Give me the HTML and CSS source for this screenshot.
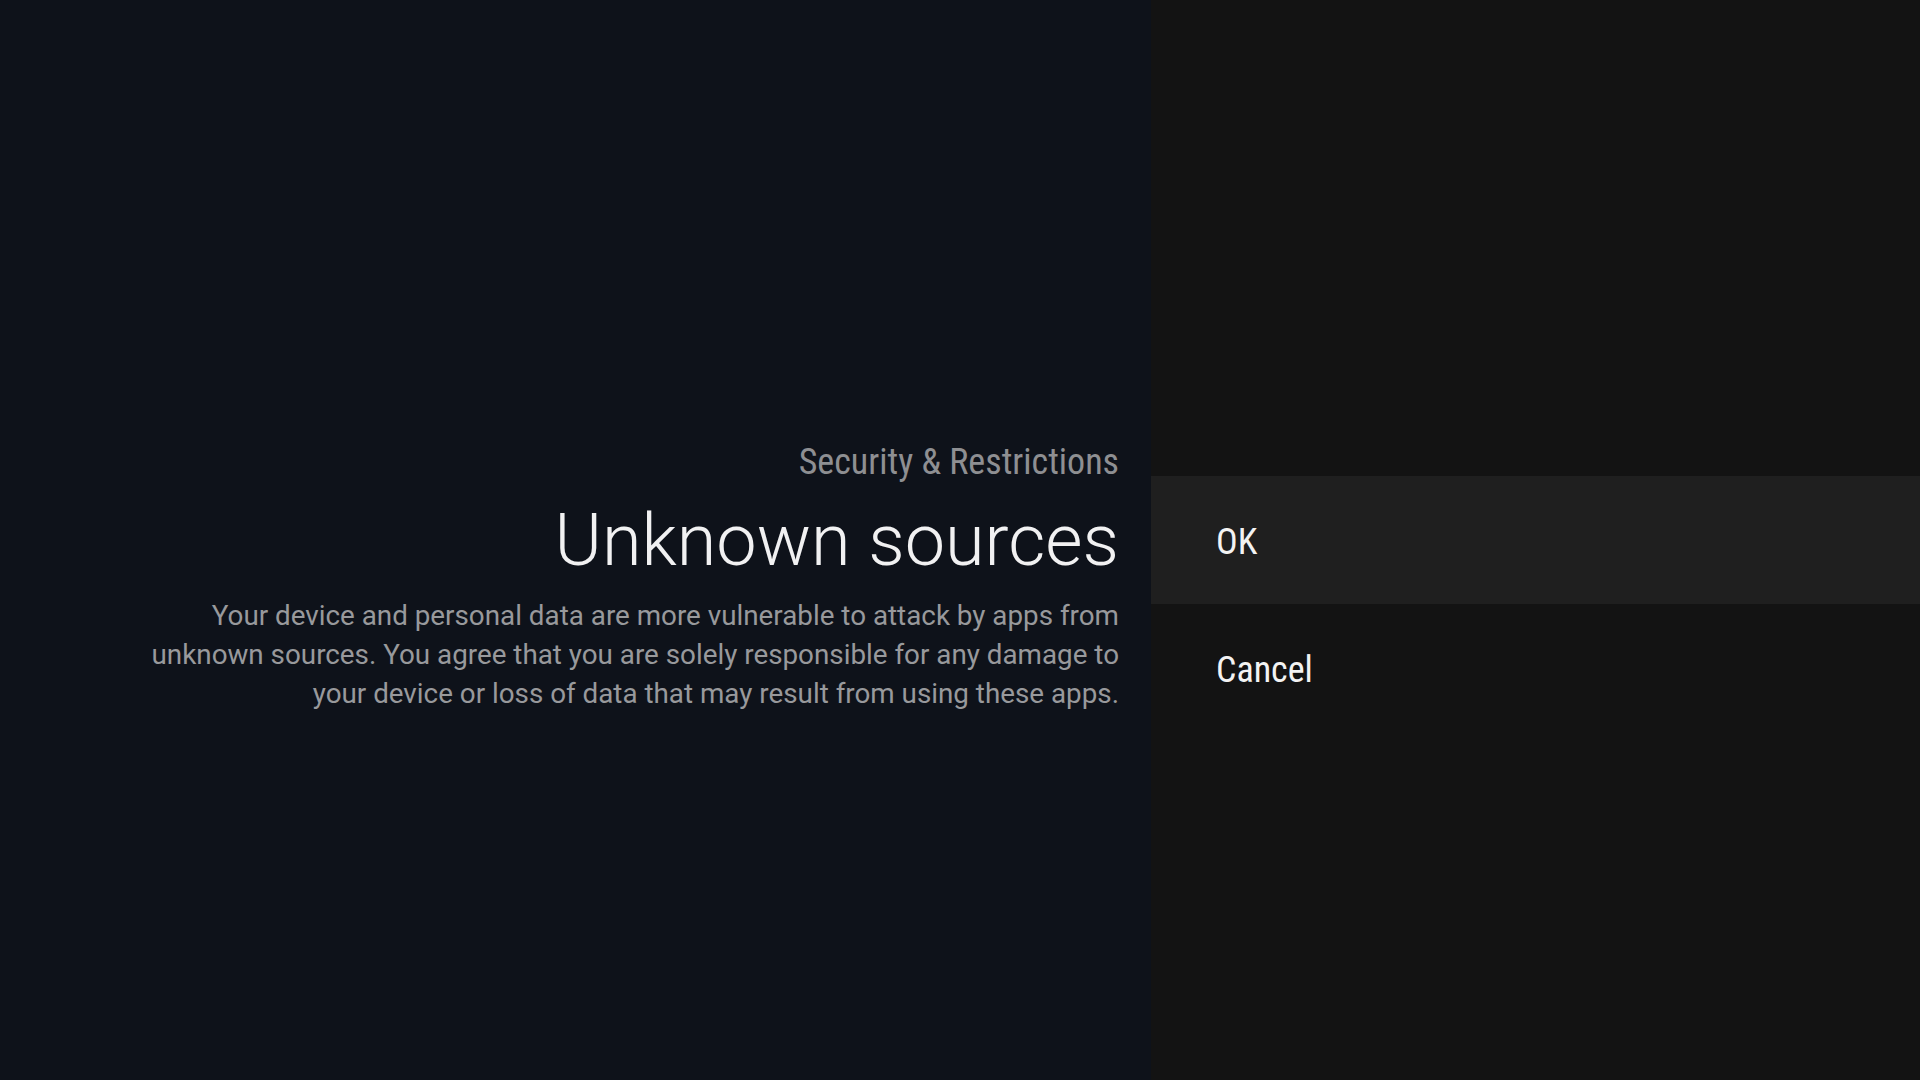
FILE: index.html
```html
<!DOCTYPE html>
<html lang="en">
<head>
  <meta charset="UTF-8">
  <title>Unknown sources</title>
  <link rel="stylesheet" href="styles.css">
</head>
<body>

  <div class="screen">
    <div class="guidance">
      <div class="breadcrumb">Security &amp; Restrictions</div>
      <h1 class="title">Unknown sources</h1>
      <p class="description">Your device and personal data are more vulnerable to attack by apps from unknown sources. You agree that you are solely responsible for any damage to your device or loss of data that may result from using these apps.</p>
    </div>

    <div class="actions">
      <div class="action focused">OK</div>
      <div class="action">Cancel</div>
    </div>
  </div>

</body>
</html>
```

FILE: styles.css
```css
html, body {
  margin: 0;
  height: 100%;
}

body {
  font-family: Roboto, "Noto Sans", sans-serif;
  background: #0f121a;
  color: #fff;
  overflow: hidden;
}

.screen {
  display: flex;
  height: 1080px;
}

.guidance {
  width: 1151px;
  box-sizing: border-box;
  padding: 440px 32px 0 100px;
  background: #0e121a;
  text-align: right;
}

.breadcrumb {
  font-family: "Roboto Condensed", Roboto, sans-serif;
  font-stretch: condensed;
  font-size: 36px;
  line-height: 44px;
  color: #8e8f92;
}

.title {
  margin: 5px 0 0;
  font-weight: 300;
  font-size: 72px;
  line-height: 104px;
  color: #f1f1f2;
}

.description {
  margin: 3px 0 0 30px;
  font-size: 27.8px;
  line-height: 39px;
  color: #98999c;
}

.actions {
  flex: 1;
  background: #131313;
  padding-top: 476px;
}

.action {
  height: 128px;
  display: flex;
  align-items: center;
  padding-left: 65px;
  padding-top: 3px;
  box-sizing: border-box;
  font-family: "Roboto Condensed", Roboto, sans-serif;
  font-stretch: condensed;
  font-size: 36px;
  color: #f3f3f3;
}

.action.focused {
  background: #1f1f1f;
}
```
